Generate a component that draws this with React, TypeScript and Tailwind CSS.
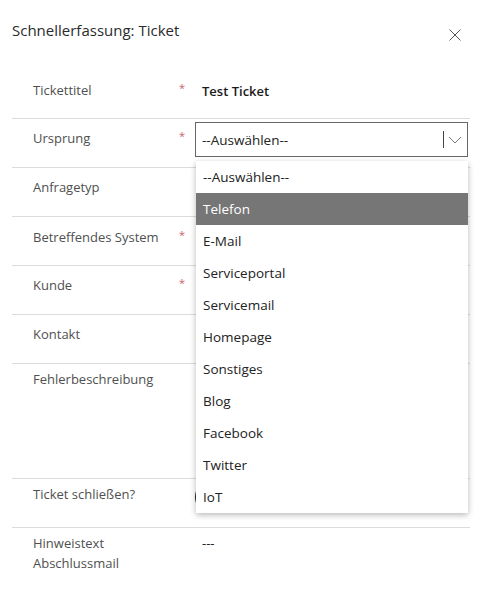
import React from "react";

function Row({
  label,
  req,
  heightCls,
  ptCls,
  border = true,
  children,
}: {
  label: React.ReactNode;
  req?: boolean;
  heightCls: string;
  ptCls: string;
  border?: boolean;
  children?: React.ReactNode;
}) {
  return (
    <div className={`flex ${heightCls} ${border ? "border-b border-[#dcdcdc]" : ""}`}>
      <div className={`w-[167px] shrink-0 pl-[21px] ${ptCls} text-[13px] leading-[20px] text-[#505050]`}>{label}</div>
      <div className={`w-[16px] shrink-0 ${ptCls} text-[11px] leading-[16px] text-[#c8626a]`}>{req ? "*" : ""}</div>
      <div className="w-[273px] shrink-0">{children}</div>
    </div>
  );
}

const options = [
  "--Auswählen--",
  "Telefon",
  "E-Mail",
  "Serviceportal",
  "Servicemail",
  "Homepage",
  "Sonstiges",
  "Blog",
  "Facebook",
  "Twitter",
  "IoT",
];

export default function App() {
  return (
    <div
      className="relative w-[487px] h-[597px] overflow-hidden bg-white"
      style={{ fontFamily: '"Open Sans", "Noto Sans", Arial, sans-serif' }}
    >
      <div className="flex items-start justify-between pl-3 pr-[26px] pt-[18px] h-[70px]">
        <div className="text-[15px] leading-[24px] text-[#2b2b2b]">Schnellerfassung: Ticket</div>
        <svg width="12" height="12" viewBox="0 0 12 12" className="mt-[11px]">
          <path d="M0.5 0.5 L11.5 11.5 M11.5 0.5 L0.5 11.5" stroke="#555" strokeWidth="1" fill="none" />
        </svg>
      </div>

      <div className="mx-3 w-[458px]">
        <Row label="Tickettitel" req heightCls="h-[49px]" ptCls="pt-[10px]">
          <div className="pl-[7px] pt-[11px] text-[13px] leading-[20px] font-semibold text-[#1a1a1a]">Test Ticket</div>
        </Row>
        <Row label="Ursprung" req heightCls="h-[49px]" ptCls="pt-[9px]">
          <div className="mt-[3px] h-[35px] border border-[#666] flex items-center pl-[6px]">
            <div className="flex-1 text-[13.5px] leading-[20px] text-[#222]">--Auswählen--</div>
            <div className="w-px h-[17px] bg-[#444]"></div>
            <svg width="23" height="10" viewBox="0 0 23 10">
              <path d="M5 2 L11 8 L17 2" stroke="#777" strokeWidth="1" fill="none" />
            </svg>
          </div>
        </Row>
        <Row label="Anfragetyp" heightCls="h-[49px]" ptCls="pt-[9px]" />
        <Row label="Betreffendes System" req heightCls="h-[49px]" ptCls="pt-[10px]" />
        <Row label="Kunde" req heightCls="h-[49px]" ptCls="pt-[9px]" />
        <Row label="Kontakt" heightCls="h-[49px]" ptCls="pt-[9px]" />
        <Row label="Fehlerbeschreibung" heightCls="h-[115px]" ptCls="pt-[5px]" />
        <Row label="Ticket schließen?" heightCls="h-[49px]" ptCls="pt-[5px]">
          <svg width="8" height="20" viewBox="0 0 8 20" className="mt-[8px] -ml-[3px]">
            <path d="M5 3 Q2 10 5 17" stroke="#333" strokeWidth="1.2" fill="none" />
          </svg>
        </Row>
        <Row
          label={
            <>
              Hinweistext
              <br />
              Abschlussmail
            </>
          }
          heightCls="h-[60px]"
          ptCls="pt-[5px]"
          border={false}
        >
          <div className="pl-[7px] pt-[5px] text-[13px] leading-[20px] text-[#222]">---</div>
        </Row>
      </div>

      <div className="absolute left-[196px] top-[161px] w-[272px] bg-white shadow-[0_2px_6px_rgba(0,0,0,0.28)]">
        {options.map((o, i) => (
          <div
            key={o}
            className={`h-[32px] flex items-center pl-[7px] text-[13.5px] ${
              i === 1 ? "bg-[#767676] text-white" : "text-[#222]"
            }`}
          >
            {o}
          </div>
        ))}
      </div>
    </div>
  );
}
